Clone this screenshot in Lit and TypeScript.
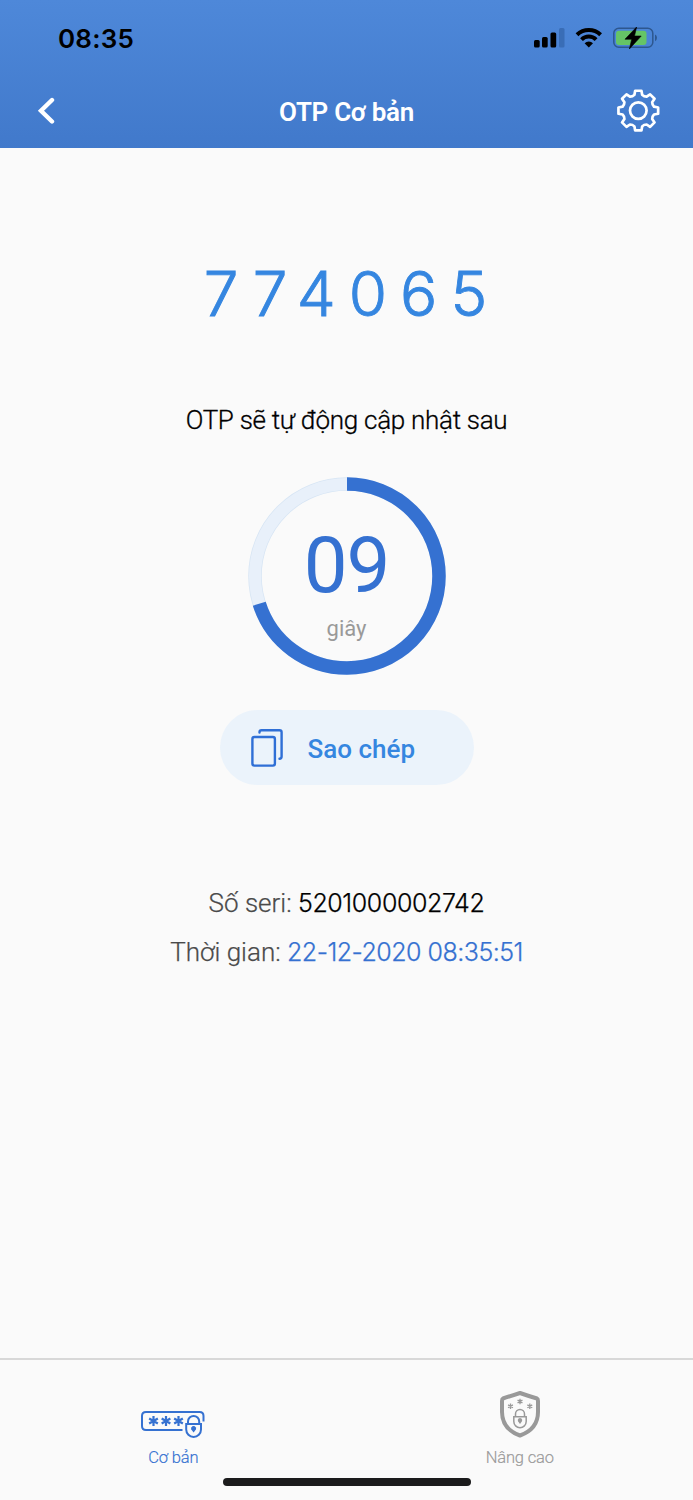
import { LitElement, html, css, svg } from "lit";
import { customElement, property } from "lit/decorators.js";

/** Outline of an eight-toothed cog centred on the origin. */
function gearPath(): string {
  const point = (r: number, deg: number) => {
    const a = ((deg - 90) * Math.PI) / 180;
    return `${(r * Math.cos(a)).toFixed(2)} ${(r * Math.sin(a)).toFixed(2)}`;
  };
  let d = "";
  for (let k = 0; k < 8; k++) {
    const c = k * 45;
    d += `${k === 0 ? "M" : "L"}${point(16.2, c - 14)}`;
    d += `L${point(20.1, c - 9)}L${point(20.1, c + 9)}L${point(16.2, c + 14)}`;
    d += `Q${point(15, c + 22.5)} ${point(16.2, c + 31)}`;
  }
  return d + "Z";
}

const star = (x: number, y: number, r: number, w: number, color: string) => svg`
  <g transform="translate(${x} ${y})" stroke=${color} stroke-width=${w}>
    <path d="M0 ${-r}V${r}M${-r * 0.87} ${-r / 2}L${r * 0.87} ${r / 2}M${-r * 0.87} ${r / 2}L${r * 0.87} ${-r / 2}" />
  </g>`;

@customElement("app-root")
export class AppRoot extends LitElement {
  @property() code = "774065";
  @property({ type: Number }) progress = 0.7;

  static styles = css`
    :host {
      display: flex;
      flex-direction: column;
      width: 693px;
      height: 1500px;
      background: #fafafa;
      font-family: Roboto, "Noto Sans", sans-serif;
      overflow: hidden;
    }
    svg { display: block; flex: none; }
    header {
      height: 148px;
      background: linear-gradient(#4e88d9, #4179cb);
      box-sizing: border-box;
    }
    .status {
      height: 76px;
      display: flex;
      align-items: center;
      justify-content: space-between;
      padding: 0 34px 0 58px;
    }
    .clock {
      font: 600 26px/30px Inter, sans-serif;
      letter-spacing: 0.2px;
      color: #000;
      padding-top: 2px;
    }
    .nav {
      height: 72px;
      display: grid;
      grid-template-columns: 100px 1fr 100px;
      align-items: center;
    }
    .title {
      text-align: center;
      color: #fff;
      font-size: 26px;
      line-height: 36px;
      font-weight: 600;
      letter-spacing: -0.3px;
    }
    .back { margin: -2px 0 0 37px; }
    .gear { margin: -2px 0 0 22px; }
    main {
      flex: 1;
      display: flex;
      flex-direction: column;
      align-items: center;
      white-space: nowrap;
    }
    .code {
      margin-top: 106px;
      font: 300 62px/80px Inter, sans-serif;
      letter-spacing: 13px;
      margin-right: -11px;
      color: #3586e0;
      -webkit-text-stroke: 0.9px #3586e0;
    }
    .hint {
      margin-top: 66px;
      font-size: 26px;
      line-height: 40px;
      font-weight: 300;
      letter-spacing: -0.28px;
      color: #000;
      -webkit-text-stroke: 0.3px #000;
    }
    .timer {
      margin-top: 37px;
      width: 198px;
      height: 198px;
      display: grid;
    }
    .ring, .count { grid-area: 1 / 1; }
    .count {
      display: flex;
      flex-direction: column;
      align-items: center;
    }
    .seconds {
      margin-top: 44px;
      font-size: 78px;
      line-height: 90px;
      letter-spacing: -1px;
      color: #3571d1;
    }
    .unit {
      margin-top: 3px;
      font-size: 22px;
      line-height: 30px;
      color: #999;
    }
    .copy {
      margin: 35px 0 0;
      border: 0;
      padding: 0 0 0 31px;
      width: 254px;
      height: 75px;
      border-radius: 38px;
      background: #ebf3fb;
      display: flex;
      align-items: center;
      gap: 24px;
      font: 500 26px/36px Roboto, sans-serif;
      letter-spacing: 0;
      color: #3586e0;
    }
    .label { padding-top: 2px; }
    .info {
      font-size: 26px;
      line-height: 49px;
      font-weight: 300;
      color: #4a4a4a;
      text-align: center;
      margin-top: 94px;
      -webkit-text-stroke: 0.25px currentColor;
    }
    .value { font-family: Inter, sans-serif; font-size: 25px; letter-spacing: -0.52px; }
    .serial { color: #000; letter-spacing: -0.4px; }
    .time { color: #3571d1; }
    footer {
      height: 142px;
      border-top: 2px solid #d8d8d8;
      box-sizing: border-box;
      display: grid;
      grid-template-columns: 1fr 1fr;
      grid-template-rows: 116px 1fr;
      justify-items: center;
    }
    .tab {
      display: flex;
      flex-direction: column;
      align-items: center;
      justify-content: flex-end;
      font-size: 16.5px;
      line-height: 24px;
      letter-spacing: -0.15px;
      padding-bottom: 6px;
      color: #3571d1;
      font-weight: 300;
      -webkit-text-stroke: 0.15px currentColor;
    }
    .lock-code { margin-bottom: 4px; }
    .shield { margin-bottom: 2px; }
    .muted { color: #999; }
    .home {
      grid-column: 1 / 3;
      width: 248px;
      height: 8px;
      border-radius: 4px;
      background: #1b1b1c;
      margin-top: 2px;
    }
  `;

  render() {
    const len = 2 * Math.PI * 92;
    return html`
      <header>
        <div class="status">
          <span class="clock">08:35</span>
          <svg width="126" height="24" viewBox="533 26 126 24">
            <rect x="534" y="40" width="5.7" height="7.5" rx="1.5" />
            <rect x="542" y="37" width="5.7" height="10.5" rx="1.5" />
            <rect x="550.5" y="32.5" width="5.7" height="15" rx="1.5" />
            <rect x="559" y="28" width="5.5" height="19.500" rx="1.5" fill="#396db6" />
            <g fill="none" stroke="#000" stroke-width="4">
              <path d="M577 34.800A17 17 0 0 1 600.6 34.800" />
              <path d="M581.5 39.600A10.400 10.400 0 0 1 596.100 39.600" />
            </g>
            <path d="M588.800 47.500L584.600 43.300A6 6 0 0 1 593 43.300Z" />
            <rect x="613.800" y="28.300" width="39" height="19" rx="5" fill="none" stroke="#2d578f" stroke-width="1.500" />
            <rect x="616" y="30.700" width="30.500" height="14.300" rx="3" fill="#65c466" />
            <path d="M655 34.500Q657 35.500 657 37.800T655 41.200Z" fill="#2d578f" />
            <path d="M636.600 27L625 39.200H631.700L629.400 49L641.200 36H634.500Z" stroke="#000" stroke-width=".6" stroke-linejoin="round" />
          </svg>
        </div>
        <div class="nav">
          <svg class="back" width="20" height="28" viewBox="0 0 20 28">
            <path d="M15 3L4 13.800L15 24.500" fill="none" stroke="#fff" stroke-width="4.400" stroke-linecap="round" />
          </svg>
          <span class="title">OTP Cơ bản</span>
          <svg class="gear" width="46" height="46" viewBox="-22 -22 46 46">
            <g fill="none" stroke="#fff" stroke-width="2.700" stroke-linejoin="round" transform="translate(1.3 .6)">
              <path d=${gearPath()} />
              <circle r="8.300" />
            </g>
          </svg>
        </div>
      </header>
      <main>
        <div class="code">${this.code}</div>
        <div class="hint">OTP sẽ tự động cập nhật sau</div>
        <div class="timer">
          <svg class="ring" width="198" height="198" viewBox="-99 -99 198 198">
            <g fill="none" transform="rotate(-90)">
              <circle r="92" stroke="#d7e5f4" stroke-width="13.500" />
              <circle r="92" stroke="#e8f0fa" stroke-width="12" />
              <circle r="92" stroke="#3571d1" stroke-width="13.500"
                stroke-dasharray="${len * this.progress} ${len}" />
            </g>
          </svg>
          <div class="count">
            <span class="seconds">09</span>
            <span class="unit">giây</span>
          </div>
        </div>
        <button class="copy">
          <svg width="33" height="38" viewBox="251 729 33 38">
            <g fill="none" stroke="#2f6fd6" stroke-width="2.400" stroke-linecap="round" stroke-linejoin="round">
              <rect x="252.400" y="737" width="22.500" height="28.600" rx="2" />
              <path d="M259.500 732.500V732Q259.500 730.300 261.500 730.300H279.500Q281.600 730.300 281.600 732.300V756.500Q281.600 758.700 279.500 758.700" />
            </g>
          </svg>
          <span class="label">Sao chép</span>
        </button>
        <div class="info">
          <div>Số seri: <span class="value serial">5201000002742</span></div>
          <div>Thời gian: <span class="value time">22-12-2020 08:35:51</span></div>
        </div>
      </main>
      <footer>
        <div class="tab">
          <svg class="lock-code" width="66" height="34" viewBox="141 1408 66 34">
            <g fill="none" stroke="#3571d1" stroke-width="2">
              <path d="M183.500 1430H147Q143 1430 143 1426V1416Q143 1412 147 1412H200.500Q204.500 1412 204.500 1416V1421.500" />
              <path d="M189 1423.500V1421.500A5.600 5.600 0 0 1 200.200 1421.500V1423.500M187.200 1424H202V1429.500A7.400 7.400 0 0 1 187.200 1429.500Z" />
            </g>
            ${star(154.5, 1421, 5, 2.2, "#3571d1")}
            ${star(167, 1421, 5, 2.2, "#3571d1")}
            ${star(179.500, 1421, 5, 2.2, "#3571d1")}
            <path d="M194.600 1432.500L192.300 1429.500A2.500 2.500 0 1 1 196.900 1429.500Z" fill="#3571d1" />
          </svg>
          <span>Cơ bản</span>
        </div>
        <div class="tab muted">
          <svg class="shield" width="42" height="54" viewBox="498.500 1390 42 54">
            <path d="M519.500 1393Q510 1396 502.500 1398.500Q501.500 1399 501.500 1401V1412Q501.500 1429 519.500 1435.500Q537.500 1429 537.500 1412V1401Q537.500 1399 536.500 1398.500Q528 1396 519.500 1393Z" fill="none" stroke="#999" stroke-width="4" stroke-linejoin="round" />
            <g fill="none" stroke="#999" stroke-width="1.500">
              <path d="M515 1416.500V1414A4.500 4.500 0 0 1 524 1414V1416.500M513.300 1416.800H525.700V1421.500A6.200 6.200 0 0 1 513.300 1421.500Z" />
            </g>
            ${star(510, 1406.300, 2.800, 1.3, "#999")}
            ${star(519.500, 1401.500, 2.800, 1.3, "#999")}
            ${star(529.300, 1406.300, 2.800, 1.3, "#999")}
            <path d="M519.500 1424L517.700 1421.500A2.200 2.200 0 1 1 521.300 1421.500Z" fill="#999" />
          </svg>
          <span>Nâng cao</span>
        </div>
        <div class="home"></div>
      </footer>
    `;
  }
}
